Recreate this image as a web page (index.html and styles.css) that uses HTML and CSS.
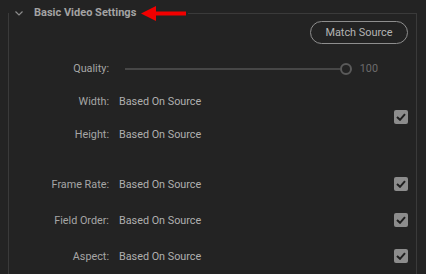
FILE: index.html
```html
<!DOCTYPE html>
<html>
<head>
<meta charset="utf-8">
<link rel="stylesheet" href="styles.css">
</head>
<body>
<div class="page">
  <fieldset class="panel">
    <legend class="panel-title">
      <svg class="chevron" width="8" height="5" viewBox="0 0 8 5"><polyline points="0.5,0.5 4,4 7.5,0.5" fill="none" stroke="#8c8c8c" stroke-width="1.2"/></svg>
      <span class="title-text">Basic Video Settings</span>
      <svg class="arrow" width="45" height="15" viewBox="0 0 45 15"><polygon points="0,7.5 15,0 15,5.5 45,5.5 45,9.5 15,9.5 15,15" fill="#f20000"/></svg>
    </legend>
    <div class="toolbar"><button class="match-btn">Match Source</button></div>
    <div class="settings">
      <div class="label r1">Quality:</div>
      <div class="slider r1">
        <div class="track"></div>
        <div class="knob"></div>
        <span class="slider-value">100</span>
      </div>

      <div class="label r2">Width:</div>
      <div class="value r2">Based On Source</div>
      <div class="check r2 span2"><svg width="10" height="8" viewBox="0 0 10 8"><polyline points="1,4 4,6.8 9,1.2" fill="none" stroke="#1e1e1e" stroke-width="2"/></svg></div>

      <div class="label r3">Height:</div>
      <div class="value r3">Based On Source</div>

      <div class="label r4">Frame Rate:</div>
      <div class="value r4">Based On Source</div>
      <div class="check r4"><svg width="10" height="8" viewBox="0 0 10 8"><polyline points="1,4 4,6.8 9,1.2" fill="none" stroke="#1e1e1e" stroke-width="2"/></svg></div>

      <div class="label r5">Field Order:</div>
      <div class="value r5">Based On Source</div>
      <div class="check r5"><svg width="10" height="8" viewBox="0 0 10 8"><polyline points="1,4 4,6.8 9,1.2" fill="none" stroke="#1e1e1e" stroke-width="2"/></svg></div>

      <div class="label r6">Aspect:</div>
      <div class="value r6">Based On Source</div>
      <div class="check r6"><svg width="10" height="8" viewBox="0 0 10 8"><polyline points="1,4 4,6.8 9,1.2" fill="none" stroke="#1e1e1e" stroke-width="2"/></svg></div>
    </div>
  </fieldset>
</div>
</body>
</html>
```

FILE: styles.css
```css
html, body {
  margin: 0;
  background: #232323;
  height: 100%;
  overflow: hidden;
}
body {
  font-family: Roboto, "Open Sans", sans-serif;
  font-size: 10.8px;
  color: #a8a8a8;
}
.page {
  padding: 5px 9px 0 8px;
}
.panel {
  margin: 0;
  border: 1px solid #3a3a3a;
  border-bottom: none;
  padding: 0 8px 8px 0;
  min-width: 0;
}
.panel-title {
  padding: 0 2px 0 0;
  display: flex;
  align-items: center;
  height: 16px;
  line-height: 16px;
}
.chevron {
  margin-left: 6px;
  margin-right: 11px;
}
.title-text {
  font-weight: 700;
  font-size: 11px;
  color: #a3a3a3;
}
.arrow {
  margin-left: 5px;
}
.toolbar {
  display: flex;
  justify-content: flex-end;
}
.match-btn {
  width: 98px;
  height: 23px;
  background: transparent;
  border: 1.5px solid #8e8e8e;
  border-radius: 12px;
  color: #b4b4b4;
  font-family: inherit;
  font-size: 10.9px;
  padding: 0;
  line-height: 20px;
}
.settings {
  display: grid;
  grid-template-columns: 100px 1fr 14px;
  grid-template-rows: 33px 33px 50px 36px 36px 20px;
  column-gap: 10px;
  margin-top: 14px;
}
.label, .value, .slider {
  line-height: 21px;
  height: 21px;
  white-space: nowrap;
}
.label {
  grid-column: 1;
  text-align: right;
  color: #a6a6a6;
}
.value {
  grid-column: 2;
  color: #b0b0b0;
}
.r1 { grid-row: 1; }
.r2 { grid-row: 2; }
.r3 { grid-row: 3; }
.r4 { grid-row: 4; }
.r5 { grid-row: 5; }
.r6 { grid-row: 6; }
.slider {
  grid-column: 2;
  display: flex;
  align-items: center;
  padding: 0 6px 0 6px;
}
.track {
  flex: 1;
  height: 2px;
  background: #474747;
}
.knob {
  width: 8px;
  height: 8px;
  border: 2px solid #5a5a5a;
  border-radius: 50%;
}
.slider-value {
  margin-left: 8px;
  color: #6c6c6c;
}
.check {
  grid-column: 3;
  width: 14px;
  height: 14px;
  margin-top: 3px;
  border-radius: 2px;
  background: #8c8c8c;
  display: flex;
  align-items: center;
  justify-content: center;
  align-self: start;
}
.check.span2 {
  grid-row: 2 / span 2;
  margin-top: 19px;
}
```
